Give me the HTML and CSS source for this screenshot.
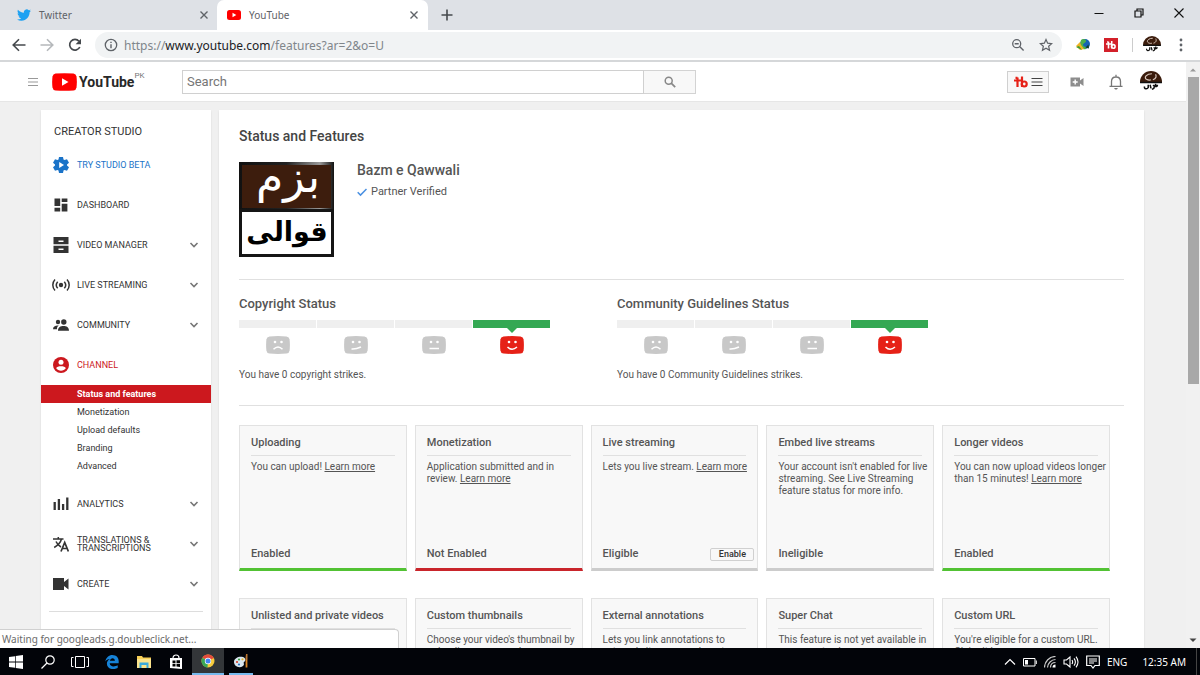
FILE: index.html
```html
<!DOCTYPE html>
<html lang="en">
<head>
<meta charset="utf-8">
<title>Status and Features - YouTube</title>
<link rel="stylesheet" href="styles.css">
</head>
<body>
<svg class="defs" aria-hidden="true">
  <symbol id="close" viewBox="0 0 10 10"><path d="M1.5 1.5l7 7M8.500 1.500l-7 7" fill="none" stroke="currentColor" stroke-width="1.400"/></symbol>
  <symbol id="chevron" viewBox="0 0 10 10"><path d="M1.500 3l3.500 3.500L8.500 3" fill="none" stroke="currentColor" stroke-width="1.600"/></symbol>
  <symbol id="channel" viewBox="0 0 24 24">
    <clipPath id="round"><circle cx="12" cy="12" r="12"/></clipPath>
    <g clip-path="url(#round)">
      <rect width="24" height="24" fill="#fff"/>
      <rect width="24" height="12.500" fill="#3b1c0c"/>
      <path d="M0 12.500h24" stroke="#111" stroke-width="1.500"/>
      <path d="M13 3c-6 0-9 4-6 6 2 1 4 1 5 .5M14 9.500c4-1 4-4 3-6" fill="none" stroke="#d9c8be" stroke-width="1.300"/>
      <path d="M5 17c-1 3 3 3 4 1v-3M11 15l1 4M14 16c2-1 2 1 1 3l-2 1M17 14v3c2 0 2-1 2-2" fill="none" stroke="#111" stroke-width="1.700"/>
    </g>
  </symbol>
  <symbol id="buddy" viewBox="0 0 14 12">
    <path d="M3.500 1.500V11M0 4.500h8M3.500 1.800H1.500M8 .5V11" fill="none" stroke="currentColor" stroke-width="2.200"/>
    <circle cx="10.200" cy="8" r="2.500" fill="none" stroke="currentColor" stroke-width="2.200"/>
  </symbol>
  <symbol id="face" viewBox="0 0 24 18">
    <path d="M3.500.5Q12-.3 20.500.5 23.300.8 23.600 3.500 24.200 9 23.600 14.500 23.300 17.200 20.500 17.500 12 18.300 3.500 17.500.7 17.200.4 14.500-.2 9 .4 3.500.7.8 3.500.5z" fill="currentColor"/>
    <circle cx="9" cy="6" r="1.300" fill="#fff"/><circle cx="15.500" cy="6" r="1.300" fill="#fff"/>
  </symbol>
</svg>

<header class="browser">
  <div class="tabstrip">
    <div class="tab">
      <svg class="i14" viewBox="0 0 24 24"><path fill="#1da1f2" d="M23.950 4.570a10 10 0 0 1-2.820.77 4.960 4.960 0 0 0 2.160-2.720 9.990 9.990 0 0 1-3.120 1.180 4.920 4.920 0 0 0-8.380 4.480C7.690 8.090 4.070 6.130 1.640 3.160a4.820 4.820 0 0 0-.67 2.480c0 1.710.87 3.210 2.190 4.100a4.900 4.900 0 0 1-2.230-.62v.06a4.920 4.920 0 0 0 3.950 4.830 5 5 0 0 1-2.210.08 4.940 4.940 0 0 0 4.600 3.420A9.870 9.870 0 0 1 0 19.540a13.990 13.990 0 0 0 7.550 2.210c9.050 0 14-7.500 14-13.980 0-.21 0-.42-.02-.63a9.940 9.940 0 0 0 2.460-2.550z"/></svg>
      <span class="tab-name">Twitter</span>
      <button class="plain" aria-label="Close Twitter"><svg class="i10"><use href="#close"/></svg></button>
    </div>
    <div class="tab active">
      <svg class="i14" viewBox="0 0 14 14"><rect y="2" width="14" height="10" rx="2.500" fill="#f00"/><path d="M5.500 4.800v4.400L9.300 7z" fill="#fff"/></svg>
      <span class="tab-name">YouTube</span>
      <button class="plain" aria-label="Close YouTube"><svg class="i10"><use href="#close"/></svg></button>
    </div>
    <button class="plain newtab" aria-label="New tab"><svg class="i12" viewBox="0 0 12 12"><path d="M6 .5v11M.5 6h11" stroke="#45494d" stroke-width="1.600"/></svg></button>
    <div class="window-controls">
      <button class="plain" aria-label="Minimize"><svg class="i10" viewBox="0 0 10 10"><path d="M.5 5.500h9" stroke="#111"/></svg></button>
      <button class="plain" aria-label="Restore"><svg class="i10" viewBox="0 0 10 10"><path d="M1 3h6v6H1zM3 3V1h6v6H7" fill="none" stroke="#111" stroke-width="1.200"/></svg></button>
      <button class="plain" aria-label="Close window"><svg class="i10" viewBox="0 0 10 10"><path d="M.5.5l9 9M9.500.5l-9 9" stroke="#111" stroke-width="1.100"/></svg></button>
    </div>
  </div>
  <div class="toolbar">
    <div class="nav-buttons">
      <button class="plain" aria-label="Back"><svg class="i14" viewBox="0 0 14 14"><path d="M13.500 7H1.500M7 1.200L1.200 7 7 12.800" fill="none" stroke="#45494d" stroke-width="1.600"/></svg></button>
      <button class="plain" aria-label="Forward"><svg class="i14" viewBox="0 0 14 14"><path d="M.5 7h12M7 1.200L12.800 7 7 12.800" fill="none" stroke="#b5b8bb" stroke-width="1.600"/></svg></button>
      <button class="plain" aria-label="Reload"><svg class="i14" viewBox="0 0 14 14"><path d="M11.800 9A5.300 5.300 0 1 1 11 3.300" fill="none" stroke="#45494d" stroke-width="1.700"/><path d="M13 .8v5.400H7.600z" fill="#45494d"/></svg></button>
    </div>
    <div class="omnibox">
      <svg class="i14" viewBox="0 0 14 14"><circle cx="7" cy="7" r="5.700" fill="none" stroke="#5f6368" stroke-width="1.300"/><path d="M7 6.300v3.900M7 3.700v1.400" stroke="#5f6368" stroke-width="1.400"/></svg>
      <div class="url" role="textbox" aria-label="Address" contenteditable="true">https://<b>www.youtube.com</b>/features?ar=2&amp;o=U</div>
      <button class="plain" aria-label="Zoom"><svg class="i14" viewBox="0 0 14 14"><circle cx="5.700" cy="5.700" r="4" fill="none" stroke="#5f6368" stroke-width="1.300"/><path d="M3.700 5.700h4M8.600 8.600l4 4" stroke="#5f6368" stroke-width="1.400"/></svg></button>
      <button class="plain" aria-label="Bookmark"><svg class="i14" viewBox="0 0 14 14"><path d="M7 1.500l1.650 3.700 4.050.4-3.050 2.700.9 4L7 10.200l-3.550 2.100.9-4L1.300 5.600l4.050-.4z" fill="none" stroke="#5f6368" stroke-width="1.200"/></svg></button>
    </div>
    <div class="extensions">
      <button class="plain" aria-label="Download manager"><svg class="i14" viewBox="0 0 14 14"><circle cx="9" cy="6" r="5" fill="#1763b4"/><path d="M5 2c2-2 5-1 5 1s-3 2-3 4 4 1 3 4c-3 1-6-1-6-4z" fill="#4cb04a"/><path d="M0 8l4-4 1 3 3 4-4 1z" fill="#f0b323"/><path d="M0 9l3-1 3 4z" fill="#3f9c35"/><path d="M9.500 9.500l3-3 .5 4z" fill="#153e27"/></svg></button>
      <button class="plain" aria-label="TubeBuddy"><svg class="i14" viewBox="0 0 14 14"><rect width="14" height="14" fill="#d3202a"/><svg x="2" y="2.500" width="10" height="9" color="#fff"><use href="#buddy"/></svg></svg></button>
      <span class="separator"></span>
      <button class="plain" aria-label="Profile"><svg class="i18"><use href="#channel"/></svg></button>
      <button class="plain" aria-label="Menu"><svg class="i14" viewBox="0 0 14 14"><g fill="#5f6368"><circle cx="7" cy="2" r="1.400"/><circle cx="7" cy="7" r="1.400"/><circle cx="7" cy="12" r="1.400"/></g></svg></button>
    </div>
  </div>
</header>

<div class="viewport">
  <div class="page">
    <header class="masthead">
      <button class="plain guide" aria-label="Guide"><svg class="i10" viewBox="0 0 10 10"><path d="M0 1.500h10M0 5h10M0 8.500h10" stroke="#999" stroke-width="1.200"/></svg></button>
      <a class="logo" href="#" aria-label="YouTube home">
        <svg class="logo-mark" viewBox="0 0 25 18"><path d="M3.500.5Q12.500-.2 21.500.5 24 .8 24.500 3.500 25.200 9 24.500 14.500 24 17.200 21.500 17.500 12.500 18.200 3.500 17.500 1 17.200.5 14.500-.2 9 .5 3.500 1 .8 3.500.5z" fill="#f00"/><path d="M10 5.200v7.600L16.500 9z" fill="#fff"/></svg>
        <span class="wordmark">YouTube</span><sup>PK</sup>
      </a>
      <form class="search">
        <input type="search" placeholder="Search" aria-label="Search">
        <button type="button" aria-label="Search"><svg class="i12" viewBox="0 0 12 12"><circle cx="4.700" cy="4.700" r="3.500" fill="none" stroke="#888" stroke-width="1.500"/><path d="M7.200 7.200l4 4" stroke="#888" stroke-width="1.800"/></svg></button>
      </form>
      <div class="account">
        <button class="buddy" aria-label="TubeBuddy menu"><svg class="i14"><use href="#buddy"/></svg><svg class="i12" viewBox="0 0 12 12"><path d="M.5 2.500h11M.5 6h11M.5 9.500h11" stroke="#444" stroke-width="1.200"/></svg></button>
        <button class="plain" aria-label="Create video"><svg class="i14" viewBox="0 0 14 14"><path d="M.5 2.500h9.500v3l3.500-2.500v8L10 8.500v3H.5z" fill="#8d8d8d"/><path d="M5.200 4.500v5M2.700 7h5" stroke="#fff" stroke-width="1.400"/></svg></button>
        <button class="plain" aria-label="Notifications"><svg class="i16" viewBox="0 0 16 16"><path d="M3.500 12V7.500C3.500 4.500 5.500 3 8 3s4.500 1.500 4.500 4.500V12M1.500 12.300h13M8 .8V3" fill="none" stroke="#777" stroke-width="1.300"/><path d="M6.200 14h3.600c-.5 2-3.100 2-3.600 0z" fill="#777"/></svg></button>
        <button class="plain" aria-label="Account"><svg class="i22"><use href="#channel"/></svg></button>
      </div>
    </header>

    <div class="columns">
      <nav class="sidebar" aria-label="Creator Studio">
        <h2>CREATOR STUDIO</h2>
        <a class="item beta" href="#"><svg class="i16" viewBox="0 0 16 16"><path d="M6 0h4l.5 2.500 1 .6L14 2.300l2 3.500-2 1.700v1l2 1.700-2 3.500-2.500-.8-1 .6L10 16H6l-.5-2.500-1-.6-2.500.8-2-3.500 2-1.700v-1L0 5.800l2-3.500 2.500.8 1-.6z" fill="currentColor"/><path d="M6.200 5v6L11 8z" fill="#fff"/></svg><span>TRY STUDIO BETA</span></a>
        <a class="item" href="#"><svg class="i16" viewBox="0 0 16 16"><path d="M1.500 1.500h5.700v7.500H1.500zM8.700 1.500h5.700V5H8.700zM1.500 10.700h5.700v3.800H1.500zM8.700 6.800h5.700v7.700H8.700z" fill="currentColor"/></svg><span>DASHBOARD</span></a>
        <a class="item" href="#"><svg class="i16" viewBox="0 0 16 16"><path d="M.5 0h15v7.300H.5zM.5 8.700h15V16H.5z" fill="currentColor"/><path d="M5.500 4.200h5M5.500 12.300h5" stroke="#fff" stroke-width="1.500"/></svg><span>VIDEO MANAGER</span><svg class="i10 more"><use href="#chevron"/></svg></a>
        <a class="item" href="#"><svg class="i16 wide" viewBox="0 0 18 16"><circle cx="9" cy="8" r="2.200" fill="currentColor"/><path d="M5.700 4.700a5 5 0 0 0 0 6.600M12.300 4.700a5 5 0 0 1 0 6.600M3 2.500a8 8 0 0 0 0 11M15 2.500a8 8 0 0 1 0 11" fill="none" stroke="currentColor" stroke-width="1.500"/></svg><span>LIVE STREAMING</span><svg class="i10 more"><use href="#chevron"/></svg></a>
        <a class="item" href="#"><svg class="i16" viewBox="0 0 16 16"><circle cx="5" cy="5" r="2.200" fill="currentColor"/><circle cx="10.800" cy="5" r="2.700" fill="currentColor"/><path d="M0 12.200c0-3 2.500-4 5.800-3.700-1.500 1-1.800 2-1.800 3.700zM5 13.700c0-3.500 2.500-4.700 5.500-4.700s5.500 1.200 5.500 4.700z" fill="currentColor"/></svg><span>COMMUNITY</span><svg class="i10 more"><use href="#chevron"/></svg></a>
        <a class="item current" href="#"><svg class="i16" viewBox="0 0 16 16"><circle cx="8" cy="8" r="8" fill="currentColor"/><circle cx="8" cy="5.200" r="2.500" fill="#fff"/><path d="M3.200 11.200C4 8.700 12 8.700 12.800 11.200c-2 3.300-7.600 3.300-9.600 0z" fill="#fff"/></svg><span>CHANNEL</span></a>
        <ul class="submenu">
          <li><a class="selected" href="#">Status and features</a></li>
          <li><a href="#">Monetization</a></li>
          <li><a href="#">Upload defaults</a></li>
          <li><a href="#">Branding</a></li>
          <li><a href="#">Advanced</a></li>
        </ul>
        <a class="item" href="#"><svg class="i16" viewBox="0 0 16 16"><path d="M1.700 6v8M5.900 3v11M10.100 8v6M14.300 1.500V14" stroke="currentColor" stroke-width="2.300"/></svg><span>ANALYTICS</span><svg class="i10 more"><use href="#chevron"/></svg></a>
        <a class="item" href="#"><svg class="i16" viewBox="0 0 16 16"><path d="M0 3h10.500M5.300 1v2M8.500 3C7.500 7 4.500 9.500 1.200 11.500M3 5.500C4 8 5.500 9.500 8 11" fill="none" stroke="currentColor" stroke-width="1.500"/><path d="M8 15.500L11.700 6.500l3.700 9M9.300 12.500h4.800" fill="none" stroke="currentColor" stroke-width="1.700"/></svg><span>TRANSLATIONS &amp; TRANSCRIPTIONS</span><svg class="i10 more"><use href="#chevron"/></svg></a>
        <a class="item" href="#"><svg class="i16" viewBox="0 0 16 16"><path d="M0 2h11v4l4.500-3.500v11L11 10v4H0z" fill="currentColor"/></svg><span>CREATE</span><svg class="i10 more"><use href="#chevron"/></svg></a>
        <hr>
      </nav>

      <main class="main">
        <h1>Status and Features</h1>
        <section class="profile">
          <svg class="avatar" viewBox="0 0 95 95" role="img" aria-label="Channel picture">
            <defs><linearGradient id="frame" x2="1"><stop offset="0" stop-color="#111"/><stop offset=".5" stop-color="#222"/><stop offset=".85" stop-color="#999"/><stop offset="1" stop-color="#111"/></linearGradient></defs>
            <rect width="95" height="95" fill="#151515"/>
            <rect width="95" height="47" fill="url(#frame)"/>
            <rect x="3" y="3" width="89" height="43" fill="#3d1d0d"/>
            <rect x="3" y="50" width="89" height="42" fill="#fff"/>
            <text class="script top" x="49" y="30" text-anchor="middle">بزم</text>
            <text class="script bottom" x="48" y="79" text-anchor="middle">قوالی</text>
          </svg>
          <div>
            <h2>Bazm e Qawwali</h2>
            <p><svg class="i10" viewBox="0 0 10 10"><path d="M.7 5.300l2.800 2.800L9.500 2" fill="none" stroke="#4a90e2" stroke-width="1.500"/></svg>Partner Verified</p>
          </div>
        </section>
        <section class="standing">
          <div>
            <h3>Copyright Status</h3>
            <div class="meter">
              <span><svg class="face" viewBox="0 0 24 18"><use href="#face"/><path d="M7.500 13.300q4.500-4.500 9 0" fill="none" stroke="#fff" stroke-width="1.500"/></svg></span>
              <span><svg class="face" viewBox="0 0 24 18"><use href="#face"/><path d="M7.500 13q4 .5 9.500-2" fill="none" stroke="#fff" stroke-width="1.500"/></svg></span>
              <span><svg class="face" viewBox="0 0 24 18"><use href="#face"/><path d="M7.500 12.500h9.500" fill="none" stroke="#fff" stroke-width="1.500"/></svg></span>
              <span class="on"><svg class="face" viewBox="0 0 24 18"><use href="#face"/><path d="M7.500 11q4.500 4.500 9.500 0" fill="none" stroke="#fff" stroke-width="1.500"/></svg></span>
            </div>
            <p>You have 0 copyright strikes.</p>
          </div>
          <div>
            <h3>Community Guidelines Status</h3>
            <div class="meter">
              <span><svg class="face" viewBox="0 0 24 18"><use href="#face"/><path d="M7.500 13.300q4.500-4.500 9 0" fill="none" stroke="#fff" stroke-width="1.500"/></svg></span>
              <span><svg class="face" viewBox="0 0 24 18"><use href="#face"/><path d="M7.500 13q4 .5 9.500-2" fill="none" stroke="#fff" stroke-width="1.500"/></svg></span>
              <span><svg class="face" viewBox="0 0 24 18"><use href="#face"/><path d="M7.500 12.500h9.500" fill="none" stroke="#fff" stroke-width="1.500"/></svg></span>
              <span class="on"><svg class="face" viewBox="0 0 24 18"><use href="#face"/><path d="M7.500 11q4.500 4.500 9.500 0" fill="none" stroke="#fff" stroke-width="1.500"/></svg></span>
            </div>
            <p>You have 0 Community Guidelines strikes.</p>
          </div>
        </section>
        <section class="features">
          <article class="card enabled"><h4>Uploading</h4><p>You can upload! <a href="#">Learn more</a></p><footer>Enabled</footer></article>
          <article class="card disabled"><h4>Monetization</h4><p>Application submitted and in review. <a href="#">Learn more</a></p><footer>Not Enabled</footer></article>
          <article class="card"><h4>Live streaming</h4><p>Lets you live stream. <a href="#">Learn more</a></p><footer>Eligible <button>Enable</button></footer></article>
          <article class="card"><h4>Embed live streams</h4><p>Your account isn't enabled for live streaming. See Live Streaming feature status for more info.</p><footer>Ineligible</footer></article>
          <article class="card enabled"><h4>Longer videos</h4><p>You can now upload videos longer than 15 minutes! <a href="#">Learn more</a></p><footer>Enabled</footer></article>
          <article class="card enabled"><h4>Unlisted and private videos</h4><p>You can make videos unlisted or private. <a href="#">Learn more</a></p><footer>Enabled</footer></article>
          <article class="card enabled"><h4>Custom thumbnails</h4><p>Choose your video's thumbnail by uploading your own. <a href="#">Learn more</a></p><footer>Enabled</footer></article>
          <article class="card enabled"><h4>External annotations</h4><p>Lets you link annotations to external sites or merch partners. <a href="#">Learn more</a></p><footer>Enabled</footer></article>
          <article class="card"><h4>Super Chat</h4><p>This feature is not yet available in your country. <a href="#">Learn more</a></p><footer>Ineligible</footer></article>
          <article class="card"><h4>Custom URL</h4><p>You're eligible for a custom URL. <a href="#">Claim it here</a></p><footer>Eligible</footer></article>
        </section>
      </main>
    </div>
  </div>
  <div class="scrollbar" aria-hidden="true">
    <svg class="i10" viewBox="0 0 10 10"><path d="M2 6.500L5 3.500l3 3z" fill="#999"/></svg>
    <span class="thumb"></span>
    <svg class="i10" viewBox="0 0 10 10"><path d="M1.500 3.500h7L5 7z" fill="#444"/></svg>
  </div>
  <div class="status-bubble">Waiting for googleads.g.doubleclick.net...</div>
</div>

<footer class="taskbar">
  <div class="apps">
    <button class="plain" aria-label="Start"><svg class="i14" viewBox="0 0 14 14"><path d="M0 2l6-.8v5.400H0zM6.700 1L14 0v6.600H6.700zM0 7.400h6v5.400L0 12zM6.700 7.400H14V14l-7.300-1z" fill="#fff"/></svg></button>
    <button class="plain" aria-label="Search"><svg class="i14" viewBox="0 0 14 14"><circle cx="9" cy="5" r="4.200" fill="none" stroke="#fff" stroke-width="1.200"/><path d="M6 8l-5.500 5.500" stroke="#fff" stroke-width="1.300"/></svg></button>
    <button class="plain" aria-label="Task view"><svg class="i18" viewBox="0 0 18 18"><path d="M4.500 3.500h9v11h-9zM2.500 4.500h-2v9h2M15.500 4.500h2v9h-2" fill="none" stroke="#fff"/></svg></button>
    <button class="plain" aria-label="Edge"><svg class="i14" viewBox="0 0 14 14"><path d="M.3 6.500C1 2.500 4 0 7.300 0 11.500 0 13.800 3 13.700 6.500V8.300H4.700c.2 3.700 5 3.700 8 1.900v2.900C8 15.300 1.700 14 1.900 8.500 2 6.300 3.300 4.700 5 3.900 2.800 4.200 1.200 5 .3 6.500zM4.900 5.800h5c0-3.600-4.500-3.500-5 0z" fill="#1683d8"/></svg></button>
    <button class="plain" aria-label="File Explorer"><svg class="i16" viewBox="0 0 16 16"><path d="M1 2h5l1 1.500h8V14H1z" fill="#f7cf57"/><path d="M1 5h14v9H1z" fill="#fbe38c"/><path d="M3.500 8.500h9V14h-2v-3h-5v3h-2z" fill="#39a9dc"/></svg></button>
    <button class="plain" aria-label="Store"><svg class="i16" viewBox="0 0 16 16"><path d="M2 4h12v11l-12-1z" fill="#fff"/><path d="M5 4c0-4 6-4 6 0" fill="none" stroke="#fff" stroke-width="1.200"/><path d="M4.500 6.500h3v2.700h-3zM8.500 6.200h3.500v3H8.500zM4.500 10h3v2.500h-3zM8.500 10h3.500v3l-3.500-.5z" fill="#000"/></svg></button>
    <button class="plain running focused" aria-label="Chrome"><svg class="i14" viewBox="0 0 14 14"><circle cx="7" cy="7" r="6.500" fill="#f7cb3c"/><path d="M7 7L1.400 3.700A6.500 6.500 0 0 1 12.800 4z" fill="#e24a3b"/><path d="M7 7L1.400 3.700A6.500 6.500 0 0 0 6.500 13.500z" fill="#3aa757"/><circle cx="7" cy="7" r="3.200" fill="#fff"/><circle cx="7" cy="7" r="2.500" fill="#4285f4"/></svg></button>
    <button class="plain running" aria-label="Paint"><svg class="i14" viewBox="0 0 14 14"><path d="M0 8c0-4 5-6 9-5 3 1 3 4 1 5-1 1 1 2-1 4-4 3-9 0-9-4z" fill="#d9e6ef"/><circle cx="3" cy="8" r="1.100" fill="#d4402b"/><circle cx="5" cy="5.500" r="1.100" fill="#3a9b44"/><circle cx="5" cy="10.500" r="1.100" fill="#2973c8"/><circle cx="8.500" cy="5.300" r="1.100" fill="#e8b72d"/><path d="M12.500 6v7.500" stroke="#d98324" stroke-width="1.800"/><path d="M11.300 6L12 0h1.500v6z" fill="#b8732f"/></svg></button>
  </div>
  <div class="tray">
    <svg class="i12" viewBox="0 0 12 12"><path d="M1 8.500l5-5 5 5" fill="none" stroke="#fff" stroke-width="1.200"/></svg>
    <svg class="i14" viewBox="0 0 14 14"><path d="M.5 3.500h11.500v7.500H.5zM13.300 5.500v3.500" fill="none" stroke="#fff"/><path d="M2 5h3v4.500H2z" fill="#fff"/></svg>
    <svg class="i12" viewBox="0 0 12 12"><path d="M.5 11.500c0-6 5-11 11-11M3.500 11.500c0-4 4-8 8-8M6.500 11.500c0-3 2-5 5-5" fill="none" stroke="#ccc" stroke-width="1.200"/><path d="M8.500 11.500c0-2 1-3 3-3v3z" fill="#fff"/></svg>
    <svg class="i16" viewBox="0 0 16 16"><path d="M1 6h2.500L7 3v10L3.500 10H1zM9 6q1.300 2 0 4M11 4.300q2.800 3.700 0 7.400M13 2.700q4 5.300 0 10.600" fill="none" stroke="#fff" stroke-width="1.100"/></svg>
    <svg class="i14" viewBox="0 0 14 14"><path d="M.7 1h12.600v9.500H9L7 13l-2-2.500H.7zM3 4h8M3 6h8M3 8h5" fill="none" stroke="#fff" stroke-width="1.200"/></svg>
    <span>ENG</span>
    <time>12:35 AM</time>
  </div>
</footer>
</body>
</html>
```
FILE: styles.css
```css
* { box-sizing: border-box; }
body {
  margin: 0;
  height: 100vh;
  display: flex;
  flex-direction: column;
  overflow: hidden;
  font-family: Roboto, "Liberation Sans", sans-serif;
  font-size: 10px;
  color: #555;
  background: #f0f0f0;
}
h1, h2, h3, h4, p, ul { margin: 0; padding: 0; font-weight: 500; }
p, ul { font-weight: 400; }
a { color: inherit; }
svg { display: block; flex: none; }
.defs { position: absolute; width: 0; height: 0; }
.i10 { width: 10px; height: 10px; }
.i12 { width: 12px; height: 12px; }
.i14 { width: 14px; height: 14px; }
.i16 { width: 16px; height: 16px; }
.i18 { width: 18px; height: 18px; }
.i22 { width: 22px; height: 22px; }
.plain {
  display: flex;
  align-items: center;
  justify-content: center;
  padding: 0;
  border: 0;
  background: none;
  color: inherit;
}

/* Browser frame */
.browser { flex: none; font-family: "Noto Sans", "Open Sans", sans-serif; color: #5f6368; }
.tabstrip { display: flex; align-items: center; height: 30px; background: #dee1e6; }
.tab { display: flex; align-items: center; gap: 8px; width: 217px; height: 30px; padding: 0 8px 0 17px; }
.tab.active { width: 211px; padding: 0 9px 0 10px; border-radius: 7px 7px 0 0; background: #fff; }
.tab-name { flex: 1; line-height: 14px; padding-bottom: 1px; }
.newtab { margin-left: 13px; }
.window-controls { display: flex; gap: 30px; margin: 0 16px 4px auto; }
.toolbar { display: flex; align-items: center; height: 32px; border-bottom: 2px solid #d5d7d9; background: #fff; }
.nav-buttons { display: flex; gap: 14px; width: 95px; padding-left: 12px; }
.omnibox {
  display: flex;
  flex: 1;
  align-items: center;
  gap: 14px;
  height: 26px;
  padding: 0 9px;
  border-radius: 13px;
  background: #f1f3f4;
}
.url { flex: 1; margin-left: -8px; font-size: 12px; color: #80868b; outline: 0; white-space: nowrap; }
.url b { font-weight: 400; color: #202124; }
.extensions { display: flex; align-items: center; gap: 14px; padding: 0 12px 0 14px; }
.separator { width: 1px; height: 14px; background: #ccc; }
.extensions .separator + .plain { margin: 0 -1px 0 -4px; }

/* Page viewport */
.viewport { position: relative; display: flex; flex: 1; min-height: 0; overflow: hidden; }
.page { flex: 1; min-width: 0; }
.scrollbar { display: flex; flex-direction: column; align-items: center; width: 14px; padding: 3px 0; background: #f1f1f1; }
.thumb { width: 11px; height: 53%; margin: 2px 0 auto 1px; background: #a8a8a8; }
.status-bubble {
  position: absolute;
  left: 0;
  bottom: 0;
  width: 399px;
  height: 19px;
  padding-left: 2px;
  border: 1px solid #d0d0d0;
  border-width: 1px 1px 0 0;
  border-radius: 0 4px 0 0;
  background: #fff;
  font: 10px/18px "Noto Sans", "Open Sans", sans-serif;
  color: #6a6a6a;
}

.masthead { display: flex; align-items: center; height: 40px; border-bottom: 1px solid #e6e6e6; background: #fff; }
.guide { margin: 0 14px 0 28px; }
.logo { display: flex; align-items: center; gap: 2px; width: 130px; color: #282828; text-decoration: none; }
.logo-mark { width: 25px; height: 18px; }
.wordmark { font: bold 14px/20px Roboto, sans-serif; }
.logo sup { align-self: flex-start; margin-left: -2px; font-size: 8px; line-height: 8px; color: #777; }
.search { display: flex; width: 514px; height: 24px; }
.search input {
  flex: 1;
  min-width: 0;
  padding: 0 4px;
  border: 1px solid #d0d0d0;
  border-radius: 0;
  background: #fff;
  font: 13px Roboto, sans-serif;
}
.search input::placeholder { color: #767676; opacity: 1; }
.search button { display: flex; align-items: center; justify-content: center; width: 52px; border: 1px solid #d3d3d3; border-left: 0; background: #f8f8f8; }
.account { display: flex; align-items: center; margin-left: auto; padding-right: 24px; }
.account .plain { margin-left: 16px; }
.account .plain:nth-child(2) { margin-left: 21px; margin-right: 8px; }
.buddy { display: flex; align-items: center; justify-content: center; gap: 3px; width: 42px; height: 22px; padding: 0; border: 1px solid #d0d0d0; background: #f8f8f8; color: #e62117; }

.columns { display: flex; align-items: flex-start; gap: 8px; padding: 8px 42px 0 41px; }
.sidebar { flex: none; width: 170px; padding-bottom: 80px; background: #fff; box-shadow: 0 1px 2px #0000001a; color: #333; }
.sidebar h2 { padding: 12px 13px 3px; font-size: 11px; line-height: 20px; font-weight: 400; }
.item { display: flex; align-items: center; gap: 8px; height: 40px; padding: 0 12px; font-size: 9px; line-height: 8px; font-weight: 400; text-decoration: none; }
.item span { flex: 1; }
.more { color: #777; }
.wide { width: 18px; margin: 0 -1px; }
.beta { color: #1a73c8; }
.current { color: #cc181e; }
.submenu { padding-bottom: 9px; list-style: none; }
.submenu a { display: block; padding-left: 36px; font-size: 9px; line-height: 18px; text-decoration: none; }
.submenu .selected { background: #cc181e; color: #fff; font-weight: 700; }
.sidebar hr { height: 1px; margin: 7px 8px 0; border: 0; background: #ddd; }

.main { flex: 1; min-width: 0; min-height: 640px; padding: 16px 20px; background: #fff; box-shadow: 0 1px 2px #0000001a; }
.main h1 { font-size: 14px; line-height: 20px; color: #444; }
.profile { display: flex; gap: 23px; padding: 16px 0 22px; border-bottom: 1px solid #e0e0e0; }
.avatar { width: 95px; height: 95px; }
.script { font-family: "DejaVu Sans", sans-serif; }
.script.top { font-size: 44px; fill: #fff; }
.script.bottom { font-size: 27px; font-weight: 700; fill: #000; }
.profile h2 { font-size: 14px; line-height: 16px; }
.profile p { display: flex; align-items: center; gap: 4px; padding-top: 7px; font-size: 11px; line-height: 14px; }
.standing { display: grid; grid-template-columns: 378px 1fr; padding: 16px 0 23px; border-bottom: 1px solid #e0e0e0; }
.standing h3 { font-size: 13px; line-height: 16px; padding-bottom: 8px; }
.standing p { padding-top: 14px; line-height: 14px; }
.meter { display: grid; grid-template-columns: repeat(4, 77px); gap: 1px; }
.meter span { display: flex; justify-content: center; padding-top: 8px; border-top: 8px solid #efefef; color: #c8c8c8; }
.meter .on { position: relative; border-color: #34a853; color: #e62117; }
.meter .on::before { content: ""; position: absolute; top: 0; border: 5px solid transparent; border-top-color: #34a853; border-bottom: 0; }
.face { width: 24px; height: 18px; }

.features { display: grid; grid-template-columns: repeat(5, 1fr); gap: 27px 8px; padding: 19px 14px 0 0; }
.card { display: flex; flex-direction: column; height: 146px; border: 1px solid #e2e2e2; border-bottom: 3px solid #ccc; background: #f8f8f8; line-height: 12px; }
.card.enabled { border-bottom-color: #52c234; }
.card.disabled { border-bottom-color: #c9252b; }
.card h4 { margin: 0 11px; padding: 9px 0 4px; border-bottom: 1px solid #e0e0e0; font-size: 11px; line-height: 16px; white-space: nowrap; }
.card p { padding: 5px 0 0 11px; }
.card footer { display: flex; align-items: center; justify-content: space-between; margin-top: auto; padding: 0 3px 6px 11px; font-size: 11px; line-height: 16px; font-weight: 500; }
.card button { width: 44px; height: 13px; padding: 0; border: 1px solid #d0d0d0; border-radius: 2px; background: #f8f8f8; font: 500 9px/10px Roboto, sans-serif; color: #333; }

/* Desktop taskbar */
.taskbar { display: flex; flex: none; justify-content: space-between; height: 27px; background: #020409; color: #fff; font-family: "Noto Sans", "Open Sans", sans-serif; }
.apps { display: flex; }
.apps .plain { width: 32px; height: 27px; }
.apps .running { border-bottom: 2px solid #76b9ed; }
.apps .focused { background: #333639; }
.apps .running:last-child { width: 24px; margin-left: 5px; }
.tray { display: flex; align-items: center; gap: 7px; margin-right: 3px; padding-right: 10px; border-right: 1px solid #444; }
.tray time { margin-left: 8px; }
```
